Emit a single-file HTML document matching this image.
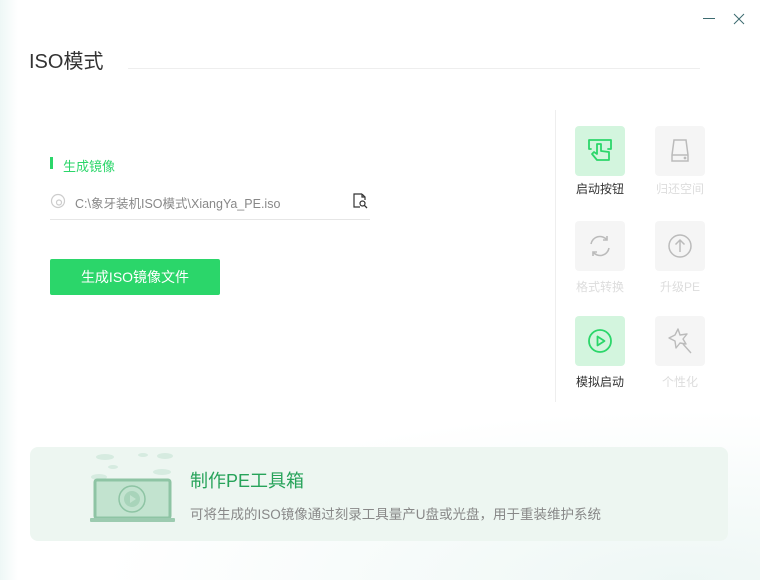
<!DOCTYPE html>
<html><head><meta charset="utf-8"><style>
*{margin:0;padding:0;box-sizing:border-box}
body{width:760px;height:580px;position:relative;overflow:hidden;background:#fff;font-family:"Liberation Sans","Noto Sans CJK SC",sans-serif}
.abs{position:absolute}
.tile{position:absolute;width:50px;height:50px;border-radius:4px;background:#f5f5f5;display:flex;align-items:center;justify-content:center}
.tile.on{background:#d3f5de}
.lbl{position:absolute;width:80px;text-align:center;font-size:12px;color:#ddd}
.lbl.on{color:#333}
</style></head><body>
<div class="abs" style="left:0;top:0;width:18px;height:580px;background:linear-gradient(90deg,#eef7f6,#fff)"></div>
<div class="abs" style="left:0;bottom:0;width:760px;height:200px;background:radial-gradient(ellipse at 90% 100%,#eef7f5 0%,rgba(255,255,255,0) 60%)"></div>
<div class="abs" style="left:703px;top:18px;width:12px;height:1px;background:#3d6b70"></div>
<svg class="abs" style="left:733px;top:13px" width="12" height="12"><path d="M1 1L11 11M11 1L1 11" stroke="#3d6b70" stroke-width="1"/></svg>
<div class="abs" style="left:29px;top:45px;font-size:20px;color:#333">ISO模式</div>
<div class="abs" style="left:128px;top:68px;width:572px;height:1px;background:#eee"></div>
<div class="abs" style="left:50px;top:157px;width:3px;height:12px;background:#2bd66a"></div>
<div class="abs" style="left:63px;top:156px;font-size:13px;color:#2bd66a">生成镜像</div>
<svg class="abs" style="left:50px;top:193px" width="16" height="16" viewBox="0 0 16 16"><circle cx="8" cy="8" r="6.5" fill="none" stroke="#ccc" stroke-width="1.2"/><circle cx="9" cy="9.5" r="2.5" fill="none" stroke="#ccc" stroke-width="1.2"/></svg>
<div class="abs" style="left:75px;top:193px;font-size:12.5px;color:#888">C:\象牙装机ISO模式\XiangYa_PE.iso</div>
<svg class="abs" style="left:352px;top:193px" width="16" height="16" viewBox="0 0 16 16"><path d="M10 1H2v13h6M10 1l3 3v3M10 1v3h3" fill="none" stroke="#333" stroke-width="1.2"/><circle cx="10.5" cy="10.5" r="2.5" fill="none" stroke="#333" stroke-width="1.2"/><path d="M12.3 12.3L15 15" stroke="#333" stroke-width="1.3"/></svg>
<div class="abs" style="left:50px;top:219px;width:320px;height:1px;background:#e6e6e6"></div>
<div class="abs" style="left:50px;top:259px;width:170px;height:36px;background:#2bd66a;border-radius:2px;color:#fff;font-size:14px;line-height:36px;text-align:center">生成ISO镜像文件</div>
<div class="abs" style="left:555px;top:110px;width:1px;height:292px;background:#eee"></div>

<div class="tile on" style="left:575px;top:126px"><svg width="30" height="30" viewBox="0 0 30 30" fill="none" stroke="#2bd66a" stroke-width="1.8" stroke-linejoin="round" stroke-linecap="round"><path d="M6 13H4V4h22v9h-3"/><path d="M12 8v10l-3-2-2 2 5 6h12v-8l-8-1V8z"/></svg></div>
<div class="lbl on" style="left:560px;top:180px">启动按钮</div>
<div class="tile" style="left:655px;top:126px"><svg width="26" height="26" viewBox="0 0 26 26" fill="none" stroke="#bbb" stroke-width="1.5"><path d="M7 2h12l2 15v6H5v-6z"/><path d="M5 17h16"/><circle cx="18" cy="20" r=".6" fill="#bbb"/></svg></div>
<div class="lbl" style="left:640px;top:180px">归还空间</div>

<div class="tile" style="left:575px;top:221px"><svg width="26" height="26" viewBox="0 0 26 26" fill="none" stroke="#bbb" stroke-width="1.6"><path d="M4 11a9 9 0 0 1 16-4M22 15a9 9 0 0 1-16 4"/><path d="M20 3v4h-4M6 23v-4h4"/></svg></div>
<div class="lbl" style="left:560px;top:278px">格式转换</div>
<div class="tile" style="left:655px;top:221px"><svg width="26" height="26" viewBox="0 0 26 26" fill="none" stroke="#bbb" stroke-width="1.5"><circle cx="13" cy="13" r="11"/><path d="M13 19V7M8.5 11.5L13 7l4.5 4.5"/></svg></div>
<div class="lbl" style="left:640px;top:278px">升级PE</div>

<div class="tile on" style="left:575px;top:316px"><svg width="26" height="26" viewBox="0 0 26 26" fill="none" stroke="#2bd66a" stroke-width="1.8"><circle cx="13" cy="13" r="11"/><path d="M10.5 8.5v9l7-4.5z" stroke-linejoin="round"/></svg></div>
<div class="lbl on" style="left:560px;top:373px">模拟启动</div>
<div class="tile" style="left:655px;top:316px"><svg width="30" height="30" viewBox="0 0 30 30" fill="none" stroke="#bbb" stroke-width="1.4" stroke-linejoin="round"><path d="M13 3l2 6 7-1-4 5 3 5-6-1-4 5-1-7-6-3 6-3z"/><path d="M18 18l8 9"/></svg></div>
<div class="lbl" style="left:640px;top:373px">个性化</div>

<div class="abs" style="left:30px;top:447px;width:698px;height:94px;background:#edf6f1;border-radius:8px;overflow:hidden">
<svg class="abs" style="left:55px;top:2px" width="120" height="75" viewBox="0 0 120 75">
<g fill="#d6ebe0"><ellipse cx="20" cy="8" rx="9" ry="3"/><ellipse cx="58" cy="6" rx="5" ry="2"/><ellipse cx="80" cy="7" rx="8" ry="3"/><ellipse cx="14" cy="28" rx="8" ry="3"/><ellipse cx="28" cy="18" rx="5" ry="2"/><ellipse cx="77" cy="23" rx="9" ry="3"/></g>
<rect x="10" y="31" width="75" height="38" rx="2" fill="#c2e3cf" stroke="#8ec4a4" stroke-width="3"/>
<circle cx="47" cy="50" r="13" fill="none" stroke="#8ec4a4" stroke-width="1.5"/><circle cx="47" cy="50" r="8" fill="#a8d4ba"/><path d="M45 46v8l6-4z" fill="#c2e3cf"/>
<rect x="5" y="69" width="85" height="4" rx="1" fill="#9ccbb0"/>
</svg>
<div class="abs" style="left:160px;top:20px;font-size:18px;color:#27a35a">制作PE工具箱</div>
<div class="abs" style="left:160px;top:56px;font-size:13.5px;color:#888">可将生成的ISO镜像通过刻录工具量产U盘或光盘，用于重装维护系统</div>
</div>
</body></html>
